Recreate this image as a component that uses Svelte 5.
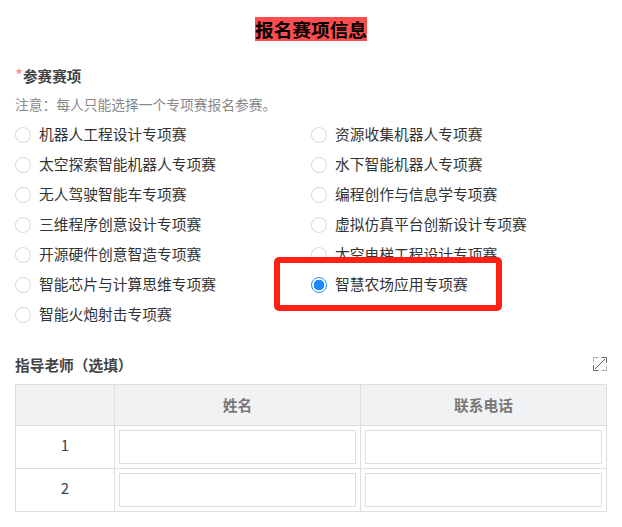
<script lang="ts">
    const options = [
        "机器人工程设计专项赛",
        "资源收集机器人专项赛",
        "太空探索智能机器人专项赛",
        "水下智能机器人专项赛",
        "无人驾驶智能车专项赛",
        "编程创作与信息学专项赛",
        "三维程序创意设计专项赛",
        "虚拟仿真平台创新设计专项赛",
        "开源硬件创意智造专项赛",
        "太空电梯工程设计专项赛",
        "智能芯片与计算思维专项赛",
        "智慧农场应用专项赛",
        "智能火炮射击专项赛",
    ];
    let selected = $state("智慧农场应用专项赛");
</script>

<main class="page">
    <h1 class="title"><span>报名赛项信息</span></h1>

    <div class="field-label"><span class="req">*</span>参赛赛项</div>
    <p class="note">注意：每人只能选择一个专项赛报名参赛。</p>

    <div class="options">
        {#each options as opt}
            <label class="option">
                <span class="radio" class:checked={selected === opt}></span>
                <input type="radio" name="event" value={opt} bind:group={selected} />
                <span class="opt-text">{opt}</span>
            </label>
        {/each}
        <div class="annotation"></div>
    </div>

    <div class="teacher-head">
        <span class="teacher-title">指导老师（选填）</span>
        <svg class="expand" width="14" height="14" viewBox="0 0 14 14" fill="none">
            <path d="M5.5 .5H.5V5.5M13.5 8.5V13.5H8.5" stroke="#a9adb3" />
            <path d="M.5 8.5V13.5H5.5M8.5 .5H13.5V5.5M2 12L12 2" stroke="#666" />
        </svg>
    </div>

    <table class="grid">
        <thead>
            <tr>
                <th class="idx"></th>
                <th>姓名</th>
                <th>联系电话</th>
            </tr>
        </thead>
        <tbody>
            {#each [1, 2] as n}
                <tr>
                    <td class="idx">{n}</td>
                    <td><input class="cell-input" type="text" /></td>
                    <td><input class="cell-input" type="text" /></td>
                </tr>
            {/each}
        </tbody>
    </table>
</main>

<style>
    :global(body) {
        background: #fff;
    }
    .page {
        width: 622px;
        height: 527px;
        box-sizing: border-box;
        padding: 17px 15px 0;
        overflow: hidden;
        font-family: "Noto Sans CJK SC", "Liberation Sans", sans-serif;
        color: #333;
    }
    .title {
        margin: 0;
        text-align: center;
        font-size: 18.67px;
        line-height: 24px;
        font-weight: 700;
        color: #000;
    }
    .title span {
        display: inline-block;
        background: #ff4d4f;
    }
    .field-label {
        margin-top: 25px;
        font-size: 14.6px;
        line-height: 20px;
        font-weight: 700;
        color: #444;
    }
    .req {
        display: inline-block;
        width: 8px;
        font-size: 17px;
        line-height: 0;
        color: #f78989;
        font-weight: 400;
    }
    .note {
        margin: 8px 0 0;
        font-size: 13.75px;
        line-height: 20px;
        color: #888;
    }
    .options {
        position: relative;
        margin-top: 4px;
        display: grid;
        grid-template-columns: 296px 296px;
        grid-auto-rows: 30px;
    }
    .option {
        display: flex;
        align-items: center;
        font-size: 14.75px;
        color: #333;
    }
    .option input {
        display: none;
    }
    .radio {
        box-sizing: border-box;
        width: 16px;
        height: 16px;
        margin: 4px 8px 0 0;
        border: 1px solid #d9d9d9;
        border-radius: 50%;
        background: #fff;
    }
    .radio.checked {
        border-color: #1e88ff;
        background: radial-gradient(circle, #1e88ff 0 5px, #fff 5.6px);
    }
    /* red highlight drawn over the screenshot */
    .annotation {
        position: absolute;
        left: 259px;
        top: 139px;
        width: 228px;
        height: 54px;
        box-sizing: border-box;
        border: 6px solid #ff1f13;
        border-radius: 5px;
    }
    .teacher-head {
        margin-top: 26px;
        display: flex;
        align-items: center;
        justify-content: space-between;
        height: 20px;
    }
    .teacher-title {
        font-size: 14.7px;
        font-weight: 700;
        color: #444;
    }
    .expand {
        display: block;
    }
    .grid {
        margin-top: 10px;
        border-collapse: collapse;
        table-layout: fixed;
    }
    .grid th,
    .grid td {
        width: 245px;
        border: 1px solid #dcdfe0;
        padding: 0;
        text-align: center;
    }
    .grid th {
        height: 38px;
        padding-bottom: 2px;
        background: #f1f2f4;
        font-size: 14.7px;
        font-weight: 700;
        color: #777;
    }
    .grid th.idx,
    .grid td.idx {
        width: 98px;
    }
    .grid td {
        height: 42px;
    }
    .grid td.idx {
        height: 36px;
        padding-bottom: 6px;
        font-size: 15px;
        color: #444;
    }
    .cell-input {
        display: block;
        box-sizing: border-box;
        width: 237px;
        height: 34px;
        margin: 0 auto;
        border: 1px solid #dcdfe0;
        background: #fff;
        outline: none;
    }
</style>
